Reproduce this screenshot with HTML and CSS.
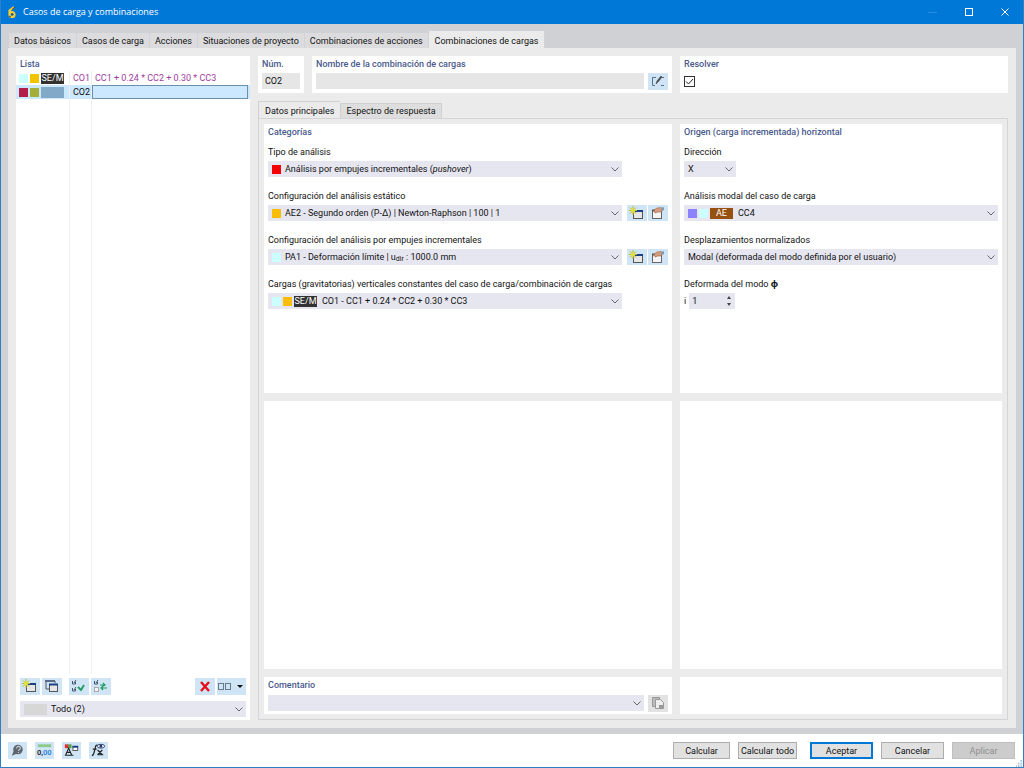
FILE: index.html
```html
<!DOCTYPE html>
<html lang="es">
<head>
  <meta charset="UTF-8" />
  <title>Casos de carga y combinaciones</title>
  <link rel="stylesheet" href="styles.css">
</head>
<body>
  <svg class="defs" aria-hidden="true">
    <symbol id="i-new" viewBox="0 0 20 17">
      <rect x="6.500" y="6.500" width="9" height="7" fill="#e6e6e6" stroke="#555"/>
      <path d="M7 6h9" stroke="#1d3f86" stroke-width="2"/>
      <path d="M6 1v9M2 5.500h8M3 2.500l6 6M9 2.500l-6 6" stroke="#b9ba20"/>
      <circle cx="6" cy="5.500" r="2.200" fill="#e2de3a"/>
    </symbol>
    <symbol id="i-edit" viewBox="0 0 20 17">
      <rect x="4.500" y="5.500" width="9" height="8" fill="#f4f4f4" stroke="#666"/>
      <path d="M4 5.500h10" stroke="#555" stroke-width="2"/>
      <path d="M6 5l3-2 4-.5 2 1.500-2 3h-3L7 8z" fill="#d69b7a" stroke="#9a6950" stroke-width=".6"/>
      <path d="M13 3l3-1v3l-2 1z" fill="#7f9bb5"/>
    </symbol>
    <symbol id="i-copy" viewBox="0 0 20 17">
      <path d="M4 11V3h9v2" fill="none" stroke="#555"/>
      <path d="M3 3h10" stroke="#5a6a86" stroke-width="2"/>
      <rect x="7.500" y="6.500" width="8" height="7" fill="#e6e6e6" stroke="#555"/>
      <path d="M7 6.500h9" stroke="#1d3f86" stroke-width="2"/>
      <path d="M4 11h3" stroke="#555"/>
    </symbol>
  </svg>

  <header class="titlebar">
    <svg class="logo" viewBox="0 0 10 12" aria-hidden="true">
      <path d="M7 1L2.500 4.500V8.500A2.500 2.500 0 1 0 5 6L3 7" fill="none" stroke="#f4cf3b" stroke-width="2.200"/>
      <path d="M8 1L5 3.500M4 8h2v1M2 10l2 1" fill="none" stroke="#5b3a24"/>
    </svg>
    <h1>Casos de carga y combinaciones</h1>
    <div class="caption">
      <button aria-label="Minimizar" disabled><svg viewBox="0 0 10 10"><path d="M0 5.500h9" stroke="#2b8be0"/></svg></button>
      <button aria-label="Maximizar"><svg viewBox="0 0 10 10"><rect x="1.500" y="1.500" width="7" height="7" fill="none" stroke="#fff"/></svg></button>
      <button aria-label="Cerrar"><svg viewBox="0 0 10 10"><path d="M1.500 1.500l7 7M8.500 1.500l-7 7" stroke="#fff"/></svg></button>
    </div>
  </header>

  <main class="window">
    <nav class="tabs">
      <button>Datos básicos</button>
      <button>Casos de carga</button>
      <button>Acciones</button>
      <button>Situaciones de proyecto</button>
      <button>Combinaciones de acciones</button>
      <button class="active">Combinaciones de cargas</button>
    </nav>

    <div class="page">
      <aside class="list box">
        <h2>Lista</h2>
        <table>
          <tr class="purple">
            <td class="tags"><div><i class="sw cyan"></i><i class="sw gold"></i><b class="tag">SE/M</b></div></td>
            <td class="num">CO1</td>
            <td class="name">CC1 + 0.24 * CC2 + 0.30 * CC3</td>
          </tr>
          <tr class="selected">
            <td class="tags"><div><i class="sw crimson"></i><i class="sw olive"></i><b class="tag steel"></b></div></td>
            <td class="num">CO2</td>
            <td class="name"></td>
          </tr>
          <tr class="filler"><td></td><td></td><td></td></tr>
        </table>
        <div class="toolbar">
          <button class="tool" aria-label="Nuevo"><svg><use href="#i-new"/></svg></button>
          <button class="tool" aria-label="Copiar"><svg><use href="#i-copy"/></svg></button>
          <button class="tool apart" aria-label="Seleccionar todo">
            <svg viewBox="0 0 20 17"><path d="M3.500 3v3h3V4M3.500 10v3h3v-2M5 5l2-3M5 12l2-3" fill="none" stroke="#46566a"/><path d="M9 9l3 3 3-5" fill="none" stroke="#1e9a5c" stroke-width="1.800"/></svg>
          </button>
          <button class="tool" aria-label="Invertir selección">
            <svg viewBox="0 0 20 17"><path d="M3.500 3v3h3V4M5 5l2-3" fill="none" stroke="#46566a"/><rect x="3.500" y="9.500" width="4" height="4" fill="#f4f4f4" stroke="#aaa"/><path d="M9 7h4M12 5l2 2-2 1M16 10h-5M12 8l-2 2 2 2" fill="none" stroke="#1e9a5c" stroke-width="1.200"/></svg>
          </button>
          <button class="tool push" aria-label="Eliminar">
            <svg viewBox="0 0 20 17"><path d="M6 4l8 9M14 4l-8 9" stroke="#e5101b" stroke-width="2.400"/></svg>
          </button>
          <button class="tool wide" aria-label="Vista">
            <svg viewBox="0 0 29 17"><rect x="1.500" y="5.500" width="5" height="6" fill="none" stroke="#667b8d"/><rect x="8.500" y="5.500" width="5" height="6" fill="none" stroke="#667b8d"/><path d="M20 7h6l-3 3z" fill="#111"/></svg>
          </button>
        </div>
        <div class="combo filter">
          <i class="blank"></i>
          <select aria-label="Filtro"><option>Todo (2)</option></select>
        </div>
      </aside>

      <div class="detail">
        <div class="top">
          <section class="box">
            <h2><label for="num">Núm.</label></h2>
            <input id="num" class="readonly" value="CO2" readonly>
          </section>
          <section class="box">
            <h2><label for="nombre">Nombre de la combinación de cargas</label></h2>
            <div class="line">
              <input id="nombre" class="readonly" readonly>
              <button class="tool" aria-label="Editar nombre">
                <svg viewBox="0 0 20 17"><path d="M8 4.500H4.500v8H7M13 12.500h3M14 4.500h2" fill="none" stroke="#57728a"/><path d="M8 11l1-3 4-5 1 1-4 5z" fill="#444" stroke="#444" stroke-width=".6"/></svg>
              </button>
            </div>
          </section>
          <section class="box">
            <h2><label for="resolver">Resolver</label></h2>
            <input id="resolver" type="checkbox" checked>
          </section>
        </div>

        <nav class="subtabs">
          <button class="active">Datos principales</button>
          <button>Espectro de respuesta</button>
        </nav>

        <div class="frame">
          <section class="box">
            <h2>Categorías</h2>
            <div class="field">
              <label for="tipo">Tipo de análisis</label>
              <div class="combo">
                <i class="sw red"></i>
                <div class="rich">
                  <select id="tipo"><option>Análisis por empujes incrementales (pushover)</option></select>
                  <span aria-hidden="true">Análisis por empujes incrementales (<em>pushover</em>)</span>
                </div>
              </div>
            </div>
            <div class="field">
              <label for="estatico">Configuración del análisis estático</label>
              <div class="combo">
                <i class="sw amber"></i>
                <select id="estatico"><option>AE2 - Segundo orden (P-Δ) | Newton-Raphson | 100 | 1</option></select>
              </div>
              <div class="actions">
                <button class="tool" aria-label="Nueva configuración"><svg><use href="#i-new"/></svg></button>
                <button class="tool" aria-label="Editar configuración"><svg><use href="#i-edit"/></svg></button>
              </div>
            </div>
            <div class="field">
              <label for="empujes">Configuración del análisis por empujes incrementales</label>
              <div class="combo">
                <i class="sw cyan"></i>
                <div class="rich">
                  <select id="empujes"><option>PA1 - Deformación límite | udir : 1000.0 mm</option></select>
                  <span aria-hidden="true">PA1 - Deformación límite | u<sub>dir</sub> : 1000.0 mm</span>
                </div>
              </div>
              <div class="actions">
                <button class="tool" aria-label="Nueva configuración"><svg><use href="#i-new"/></svg></button>
                <button class="tool" aria-label="Editar configuración"><svg><use href="#i-edit"/></svg></button>
              </div>
            </div>
            <div class="field">
              <label for="cargas">Cargas (gravitatorias) verticales constantes del caso de carga/combinación de cargas</label>
              <div class="combo">
                <i class="sw cyan"></i><i class="sw amber"></i><b class="tag">SE/M</b>
                <select id="cargas"><option>CO1 - CC1 + 0.24 * CC2 + 0.30 * CC3</option></select>
              </div>
            </div>
          </section>

          <section class="box origin">
            <h2>Origen (carga incrementada) horizontal</h2>
            <div class="field">
              <label for="direccion">Dirección</label>
              <div class="combo short"><select id="direccion"><option>X</option></select></div>
            </div>
            <div class="field">
              <label for="modal">Análisis modal del caso de carga</label>
              <div class="combo">
                <i class="sw violet"></i><i class="sw cyan"></i><b class="tag brown">AE</b>
                <select id="modal"><option>CC4</option></select>
              </div>
            </div>
            <div class="field">
              <label for="desp">Desplazamientos normalizados</label>
              <div class="combo"><select id="desp"><option>Modal (deformada del modo definida por el usuario)</option></select></div>
            </div>
            <div class="field">
              <label for="modo">Deformada del modo <b>ϕ</b></label>
              <div class="mode">
                <span>i</span>
                <div class="spin">
                  <input id="modo" value="1">
                  <svg viewBox="0 0 6 12" aria-hidden="true"><path d="M1 4h4L3 1zM1 8h4l-2 3z" fill="#444"/></svg>
                </div>
              </div>
            </div>
          </section>

          <section class="box"></section>
          <section class="box"></section>

          <section class="box comment">
            <h2><label for="comentario">Comentario</label></h2>
            <div class="line">
              <div class="combo"><select id="comentario"><option></option></select></div>
              <button class="tool off" aria-label="Copiar comentario" disabled>
                <svg viewBox="0 0 20 17"><path d="M4.500 2.500h7v9h-7z" fill="#bbb" stroke="#999"/><path d="M7.500 4.500h5l3 3v6h-8z" fill="#ededed" stroke="#999"/><path d="M11 10h4v3h-4z" fill="#999"/></svg>
              </button>
            </div>
          </section>
          <section class="box"></section>
        </div>
      </div>
    </div>
  </main>

  <footer class="footer">
    <div class="links">
      <button class="tool" aria-label="Ayuda">
        <svg viewBox="0 0 20 17"><circle cx="10.500" cy="7.500" r="5" fill="#5e656c"/><path d="M6 9l-2 5 5-2z" fill="#5e656c"/><path d="M9 6.500c0-3 4-3 4-.5 0 1.500-2 1.500-2 3M11 10v1" fill="none" stroke="#c5ced5" stroke-width="1.200"/></svg>
      </button>
      <button class="tool" aria-label="Unidades">
        <svg viewBox="0 0 20 17"><path d="M3 2h14v3H3z" fill="#8cc98a"/><text x="2" y="13" class="digits">0,<tspan fill="#2d7fdc">00</tspan></text></svg>
      </button>
      <button class="tool" aria-label="Opciones de visualización">
        <svg viewBox="0 0 20 17"><path d="M3 2h4v4H3z" fill="#d9342b"/><path d="M7 2h3v4H7z" fill="#46a546"/><path d="M4 13l3-7 3 7M5 10.500h4M3 13.500h9" fill="none" stroke="#222" stroke-width="1.200"/><rect x="11.500" y="4.500" width="5" height="4" fill="#fff" stroke="#555"/><path d="M11 4.500h6" stroke="#1d3f86" stroke-width="2"/></svg>
      </button>
      <button class="tool" aria-label="Fórmulas">
        <svg viewBox="0 0 20 17"><path d="M9 3c-2-1-2 1-3 5s-1 6-3 6M4 7h4" fill="none" stroke="#222" stroke-width="1.300"/><path d="M9 8l5 5M14 8l-5 5M9 13h6" stroke="#222" stroke-width="1.200"/><ellipse cx="12.500" cy="4" rx="4" ry="2" fill="#fff" stroke="#243c70"/><circle cx="12.500" cy="4" r="1.500" fill="#243c70"/></svg>
      </button>
    </div>
    <div class="buttons">
      <button>Calcular</button>
      <button class="second">Calcular todo</button>
      <button class="primary">Aceptar</button>
      <button>Cancelar</button>
      <button disabled>Aplicar</button>
    </div>
    <svg class="grip" viewBox="0 0 8 8" aria-hidden="true"><path d="M5 0h2v2H5zM2 3h2v2H2zM5 3h2v2H5zM0 6h1v2H0zM2 6h2v2H2zM5 6h2v2H5z" fill="#b4c3d2"/></svg>
  </footer>
</body>
</html>
```

FILE: styles.css
```css
* {
  box-sizing: border-box;
}
body {
  margin: 0;
  min-height: 100vh;
  display: flex;
  flex-direction: column;
  border: 1px solid #2f7fc4;
  border-top: 0;
  background: #fff;
  color: #111;
  font: 9px/12px Roboto, "Noto Sans", sans-serif;
}
button, input, select {
  font: inherit;
  color: inherit;
  margin: 0;
  padding: 0;
  border: 0;
  border-radius: 0;
}
svg {
  display: block;
}
.defs {
  position: absolute;
  width: 0;
  height: 0;
}
h1, h2 {
  margin: 0;
  font-size: inherit;
  font-weight: 400;
}
h2 {
  color: #4a5a8c;
  font-weight: 500;
}

/* title bar */
.titlebar {
  display: flex;
  align-items: center;
  height: 24px;
  padding-left: 6px;
  background: #0078d7;
  color: #fff;
}
.titlebar h1 {
  flex: 1;
  padding-left: 6px;
  font-family: "Open Sans", sans-serif;
}
.logo {
  width: 10px;
  height: 12px;
}
.caption {
  display: flex;
}
.caption button {
  width: 36px;
  height: 24px;
  padding: 0 13px;
  background: none;
}
.caption svg {
  width: 10px;
  height: 10px;
}

/* main area */
.window {
  flex: 1;
  display: flex;
  flex-direction: column;
  padding: 7px 7px 6px;
  background: #d0d1d5;
}
.tabs, .subtabs {
  display: flex;
  align-items: flex-end;
}
.tabs {
  padding-left: 1px;
}
.tabs button {
  height: 15px;
  padding: 0 5px;
  background: #dcdcde;
  border-right: 1px solid #d3d3d6;
}
.tabs .active {
  height: 17px;
  padding: 2px 6px 0;
  background: #ebebeb;
}
.page {
  flex: 1;
  display: flex;
  gap: 8px;
  padding: 8px;
  background: #ebebeb;
}
.box {
  min-width: 0;
  padding: 2px 4px 3px;
  background: #fff;
}

/* list */
.list {
  display: flex;
  flex-direction: column;
  width: 234px;
  padding: 2px 0 3px;
}
.list h2 {
  padding: 0 0 1px 4px;
}
.list table {
  flex: 1;
  display: flex;
  flex-direction: column;
  margin-bottom: 4px;
}
.list tbody {
  flex: 1;
  display: flex;
  flex-direction: column;
}
.list tr {
  display: grid;
  grid-template-columns: 54px 22px 1fr;
  height: 14px;
  line-height: 14px;
}
.list .filler {
  flex: 1;
}
.list td {
  padding: 0;
  border-right: 1px solid #eee;
}
.list td:last-child {
  border-right: 0;
}
.tags div {
  display: flex;
  align-items: center;
  gap: 2px;
  height: 14px;
  padding-left: 3px;
}
.list .num {
  padding-left: 3px;
}
.list .name {
  padding-left: 3px;
}
.purple {
  color: #a03ca0;
}
.selected {
  background: #cce8ff;
}
.selected .name {
  margin-right: 2px;
  border: 1px solid #6a8fb0;
}
.list .selected .name {
  border-right: 1px solid #6a8fb0;
}
.sw {
  flex: none;
  width: 9px;
  height: 9px;
}
.cyan { background: #ccffff; }
.gold { background: #f0c400; }
.amber { background: #fabe0a; }
.red { background: #f50000; }
.violet { background: #8c82ff; }
.crimson { background: #b41e46; }
.olive { background: #a5af37; }
.tag {
  flex: none;
  width: 23px;
  height: 11px;
  background: #323232;
  color: #fff;
  font-weight: 400;
  line-height: 11px;
  text-align: center;
}
.tag.steel { background: #82aac8; }
.tag.brown { background: #96500f; }

.toolbar {
  display: flex;
  gap: 2px;
  padding: 0 4px 6px 4px;
}
.apart {
  margin-left: 5px;
}
.push {
  margin-left: auto;
}
.tool {
  flex: none;
  width: 20px;
  height: 17px;
  background: #cfe5f5;
}
.tool svg {
  width: 100%;
  height: 17px;
}
.tool.wide {
  width: 29px;
}
.tool.off {
  background: #e2e2e2;
}

/* drop-downs */
.combo {
  flex: 1;
  display: flex;
  align-items: center;
  gap: 2px;
  height: 16px;
  padding-left: 4px;
  background: #e6e6f0;
}
.combo select {
  flex: 1;
  min-width: 0;
  width: 100%;
  height: 16px;
  padding-left: 2px;
  appearance: none;
  background: url("data:image/svg+xml,%3Csvg xmlns='http://www.w3.org/2000/svg' width='8' height='5'%3E%3Cpath d='M.5.5L4 4 7.500.5' fill='none' stroke='%23666'/%3E%3C/svg%3E") no-repeat right 3px center;
}
.combo > select:first-child {
  padding-left: 0;
}
.tag + select {
  padding-left: 3px;
}
.filter {
  flex: none;
  margin: 0 4px;
}
.blank {
  width: 23px;
  height: 11px;
  background: #d7d7d7;
}
.rich {
  flex: 1;
  position: relative;
  height: 16px;
}
.rich select {
  color: transparent;
}
.rich span {
  position: absolute;
  left: 2px;
  top: 0;
  line-height: 16px;
  pointer-events: none;
}
.rich sub {
  font-size: 7px;
  line-height: 0;
  vertical-align: -1px;
}

/* detail */
.detail {
  flex: 1;
  min-width: 0;
  display: flex;
  flex-direction: column;
}
.top {
  display: grid;
  grid-template-columns: 46px 1fr 328px;
  gap: 8px;
  margin-bottom: 8px;
}
.top .box {
  height: 37px;
}
.readonly {
  display: block;
  width: 100%;
  height: 16px;
  padding-left: 3px;
  background: #e6e6e6;
}
.top h2 {
  margin-bottom: 3px;
}
.line {
  display: flex;
  gap: 4px;
}
.top input[type="checkbox"] {
  appearance: none;
  display: block;
  width: 11px;
  height: 11px;
  margin-top: 6px;
  border: 1px solid #333;
  background: url("data:image/svg+xml,%3Csvg xmlns='http://www.w3.org/2000/svg' width='9' height='9'%3E%3Cpath d='M1 4.500L3.500 7 8 2' fill='none' stroke='%23222'/%3E%3C/svg%3E") no-repeat center;
}
.subtabs button {
  height: 15px;
  padding: 0 5px;
  background: #dedede;
  border: 1px solid #d0d0d3;
  border-bottom: 0;
}
.subtabs .active {
  height: 17px;
  padding: 2px 6px 0;
  background: #ebebeb;
  border-right: 0;
}
.frame {
  flex: 1;
  display: grid;
  grid-template-columns: 1fr 322px;
  grid-template-rows: 1fr 1fr 37px;
  gap: 8px;
  padding: 5px;
  border: 1px solid #d4d4d8;
}
.field {
  display: grid;
  grid-template-columns: 1fr 41px;
  gap: 3px 5px;
  margin-bottom: 13px;
}
.box > h2 + .field {
  margin-top: 8px;
}
.field label {
  grid-column: 1 / -1;
}
.actions {
  display: flex;
  gap: 1px;
}
.actions .tool {
  height: 16px;
}
.origin .field {
  grid-template-columns: 1fr;
}
.combo.short {
  width: 52px;
}
.mode {
  display: flex;
  align-items: center;
  gap: 3px;
}
.spin {
  display: flex;
  align-items: center;
  width: 46px;
  height: 16px;
  padding: 0 3px;
  background: #e6e6f0;
}
.spin input {
  flex: 1;
  min-width: 0;
  background: none;
}
.spin svg {
  width: 6px;
  height: 12px;
}
.comment h2 {
  margin-bottom: 4px;
}

/* footer */
.footer {
  position: relative;
  display: flex;
  justify-content: space-between;
  align-items: center;
  height: 33px;
  padding: 0 8px 0 7px;
}
.links, .buttons {
  display: flex;
  gap: 8px;
}
.links .tool {
  width: 19px;
}
.digits {
  font: 600 8px Roboto, sans-serif;
  fill: #222;
}
.buttons button {
  width: 63px;
  height: 17px;
  background: #e1e1e1;
  border: 1px solid #adadad;
}
.buttons button:first-child {
  width: 57px;
}
.buttons .second {
  width: 59px;
  margin-right: 5px;
}
.buttons .primary {
  border: 2px solid #0078d7;
}
.buttons button:disabled {
  background: #ccc;
  border-color: #bfbfbf;
  color: #8f8f8f;
}
.grip {
  position: absolute;
  right: 0;
  bottom: 0;
  width: 7px;
  height: 7px;
}
```
